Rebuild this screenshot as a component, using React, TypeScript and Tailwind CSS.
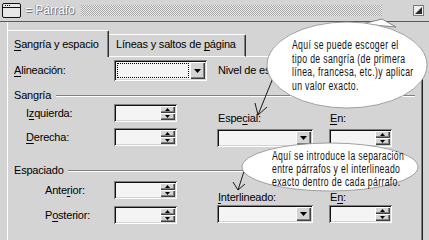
import React from "react";

const sunken =
  "bg-[#f4f4f4] shadow-[inset_1px_1px_0_#808080,inset_-1px_-1px_0_#ffffff,inset_2px_2px_0_#111111,inset_-2px_-2px_0_#d4d4d4]";
const raised =
  "bg-[#d4d4d4] shadow-[inset_1px_1px_0_#ffffff,inset_-1px_-1px_0_#404040,inset_-2px_-2px_0_#808080]";

function Tri({ up }: { up?: boolean }) {
  return (
    <svg width="7" height="4" viewBox="0 0 7 4">
      {up ? <polygon points="3.5,0 7,4 0,4" fill="#000" /> : <polygon points="0,0 7,0 3.5,4" fill="#000" />}
    </svg>
  );
}

function SmallTri({ up }: { up?: boolean }) {
  return (
    <svg width="5" height="3" viewBox="0 0 5 3">
      {up ? <polygon points="2.5,0 5,3 0,3" fill="#000" /> : <polygon points="0,0 5,0 2.5,3" fill="#000" />}
    </svg>
  );
}

function Spinner() {
  return (
    <div className={`w-[63px] h-[18px] flex justify-end p-[2px] ${sunken}`}>
      <div className="w-[15px] flex flex-col">
        <div className={`flex-1 flex items-center justify-center ${raised}`}>
          <SmallTri up />
        </div>
        <div className={`flex-1 flex items-center justify-center ${raised}`}>
          <SmallTri />
        </div>
      </div>
    </div>
  );
}

function Dropdown({ w = "w-[96px]", h = "h-[18px]", focus = false }: { w?: string; h?: string; focus?: boolean }) {
  return (
    <div className={`${w} ${h} flex p-[2px] ${sunken}`}>
      <div className="flex-1 flex">
        {focus && <div className="flex-1 m-[1px] border border-dotted border-black" />}
      </div>
      <div className={`w-[15px] flex items-center justify-center ${raised}`}>
        <Tri />
      </div>
    </div>
  );
}

function U({ children }: { children: React.ReactNode }) {
  return <span className="underline underline-offset-[2px] decoration-[1px]">{children}</span>;
}

function Etched() {
  return <div className="flex-1 h-[2px] border-t border-[#808080] border-b border-b-white" />;
}

export default function App() {
  return (
    <div className="w-[429px] h-[240px] overflow-hidden relative bg-[#d4d4d4] font-['Liberation_Sans',Arial,sans-serif] text-[11px] leading-[13px] text-black tracking-[-0.2px]">
      {/* Title bar */}
      <div className="h-[22px] flex items-center border-b border-[#5a5a5a] pl-[2px] pr-[5px]">
        <svg width="19" height="15" viewBox="0 0 19 15">
          <rect x="0.5" y="0.5" width="18" height="14" rx="1.5" fill="#e8e8e8" stroke="#111" />
          <line x1="1" y1="4.5" x2="18" y2="4.5" stroke="#111" />
          <rect x="3" y="2" width="1" height="1" fill="#111" />
          <rect x="5" y="2" width="1" height="1" fill="#111" />
          <rect x="7" y="2" width="1" height="1" fill="#111" />
        </svg>
        <span className="ml-[4px] text-[12px] tracking-[0px] text-white [text-shadow:1px_1px_0_#777,-1px_0_0_#999]">= Párrafo</span>
        <svg className="ml-[6px]" width="301" height="11" viewBox="0 0 301 11">
          <defs>
            <pattern id="chk" width="2" height="2" patternUnits="userSpaceOnUse">
              <rect width="2" height="2" fill="#ececec" />
              <rect width="1" height="1" fill="#a8a8a8" />
              <rect x="1" y="1" width="1" height="1" fill="#a8a8a8" />
            </pattern>
          </defs>
          <rect width="301" height="11" fill="url(#chk)" />
        </svg>
        <div className="flex-1" />
        <svg width="11" height="11" viewBox="0 0 11 11">
          <rect x="0.5" y="0.5" width="10" height="10" fill="#eeeeee" stroke="#7a7a7a" />
          <polygon points="2,9 9,2 9,9" fill="#2a2a2a" />
        </svg>
      </div>

      {/* Body */}
      <div className="ml-[7px] w-[416px] h-[218px] border-l border-white flex flex-col">
        {/* Tabs */}
        <div className="h-[35px] flex items-end shrink-0">
          <div className="w-[101px] h-[27px] border-t border-white border-r border-r-[#303030] rounded-tr-[2px] shadow-[inset_-1px_0_0_#808080] pl-[6px] pt-[7px] whitespace-nowrap">
            <U>S</U>angría y espacio
          </div>
          <div className="w-[137px] h-[23px] border-t border-white border-b border-b-white border-r border-r-[#303030] rounded-tr-[2px] shadow-[inset_-1px_0_0_#808080] pl-[7px] pt-[3px] whitespace-nowrap">
            Líneas y saltos de <U>p</U>ágina
          </div>
          <div className="flex-1 h-full border-b border-white" />
        </div>

        {/* Panel */}
        <div className="flex-1 border-r border-[#202020] shadow-[inset_-1px_0_0_#808080] pl-[6px] flex flex-col">
          {/* Alineación */}
          <div className="mt-[3px] h-[21px] flex items-center">
            <div className="w-[100px]">
              <U>A</U>lineación:
            </div>
            <Dropdown w="w-[93px]" h="h-[21px]" focus />
            <div className="ml-[11px] whitespace-nowrap">Nivel de es</div>
          </div>

          {/* Sangría header */}
          <div className="mt-[8px] h-[13px] flex items-center pr-[7px]">
            <span>Sangría</span>
            <div className="ml-[5px] flex-1 flex">
              <Etched />
            </div>
          </div>

          {/* Sangría block */}
          <div className="flex">
            <div className="w-[203px] flex flex-col pt-[2px] gap-[6px]">
              <div className="h-[18px] flex items-center">
                <div className="w-[100px] pl-[12px]">
                  I<U>z</U>quierda:
                </div>
                <Spinner />
              </div>
              <div className="h-[18px] flex items-center">
                <div className="w-[100px] pl-[12px]">
                  <U>D</U>erecha:
                </div>
                <Spinner />
              </div>
            </div>
            <div className="w-[112px] flex flex-col">
              <div className="mt-[10px] h-[13px] pl-[1px]">
                Espe<U>c</U>ial:
              </div>
              <div className="mt-[4px]">
                <Dropdown />
              </div>
            </div>
            <div className="flex flex-col">
              <div className="mt-[10px] h-[13px] pl-[1px]">
                <U>E</U>n:
              </div>
              <div className="mt-[4px]">
                <Spinner />
              </div>
            </div>
          </div>

          {/* Espaciado header */}
          <div className="mt-[17px] h-[13px] flex items-center pr-[7px]">
            <span>Espaciado</span>
            <div className="ml-[4px] flex-1 flex">
              <Etched />
            </div>
          </div>

          {/* Espaciado block */}
          <div className="flex">
            <div className="w-[203px] flex flex-col pt-[4px] gap-[7px]">
              <div className="h-[18px] flex items-center">
                <div className="w-[100px] pl-[31px]">
                  Ante<U>r</U>ior:
                </div>
                <Spinner />
              </div>
              <div className="h-[18px] flex items-center">
                <div className="w-[100px] pl-[31px]">
                  P<U>o</U>sterior:
                </div>
                <Spinner />
              </div>
            </div>
            <div className="w-[112px] flex flex-col">
              <div className="mt-[14px] h-[13px] pl-[1px]">
                <U>I</U>nterlineado:
              </div>
              <div className="mt-[1px]">
                <Dropdown />
              </div>
            </div>
            <div className="flex flex-col">
              <div className="mt-[14px] h-[13px] pl-[1px]">
                E<U>n</U>:
              </div>
              <div className="mt-[1px]">
                <Spinner />
              </div>
            </div>
          </div>
        </div>
      </div>

      {/* Callout overlays */}
      <svg className="absolute left-0 top-0 pointer-events-none" width="429" height="240" viewBox="0 0 429 240">
        <line x1="277" y1="68" x2="258" y2="115" stroke="#1a1a1a" strokeWidth="1" />
        <polyline points="255,103 258,115 267,107" fill="none" stroke="#1a1a1a" strokeWidth="1" />
        <polygon points="362,24 382,19 396,27" fill="#ffffff" stroke="#6a6a6a" strokeWidth="0.8" />
        <ellipse cx="347" cy="65" rx="80" ry="43" fill="#ffffff" stroke="#8a8a8a" strokeWidth="0.8" />

        <line x1="247" y1="162" x2="238" y2="190" stroke="#1a1a1a" strokeWidth="1" />
        <polyline points="233,182 238,190 245,184" fill="none" stroke="#1a1a1a" strokeWidth="1" />
        <ellipse cx="330" cy="167" rx="88" ry="24" fill="#ffffff" stroke="#8a8a8a" strokeWidth="0.8" />
      </svg>

      <div className="absolute left-[292px] top-[39px] text-[12px] leading-[13.7px] tracking-[0.5px] text-[#111] whitespace-nowrap scale-x-[0.72] origin-left">
        <div>Aquí se puede escoger el</div>
        <div>tipo de sangría (de primera</div>
        <div>línea, francesa, etc.)y aplicar</div>
        <div>un valor exacto.</div>
      </div>

      <div className="absolute left-[272px] top-[150px] text-[12px] leading-[13px] tracking-[0.5px] text-[#111] whitespace-nowrap scale-x-[0.72] origin-left">
        <div>Aquí se introduce la separación</div>
        <div>entre párrafos y el interlineado</div>
        <div>exacto dentro de cada párrafo.</div>
      </div>
    </div>
  );
}
